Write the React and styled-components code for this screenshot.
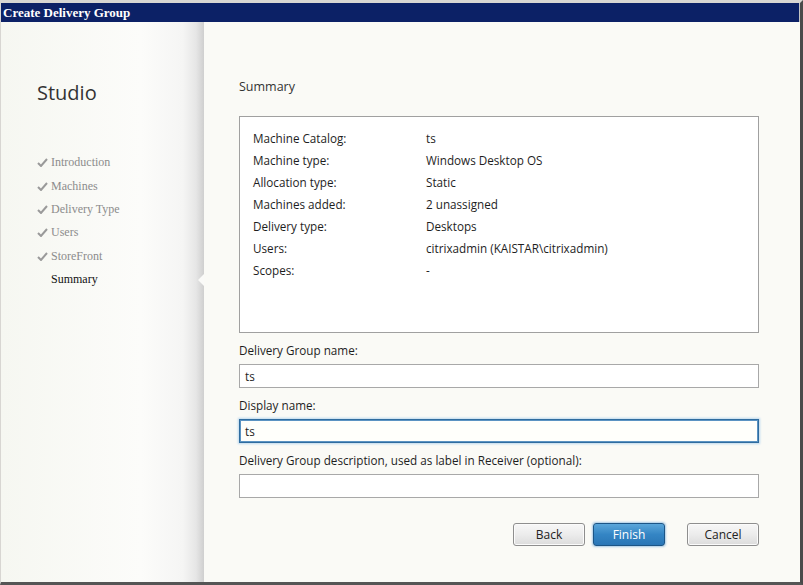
import React from "react";
import styled, { createGlobalStyle } from "styled-components";

const GlobalStyle = createGlobalStyle`
  html, body {
    margin: 0;
    padding: 0;
    background: #d6d3ce;
  }
  * { box-sizing: border-box; }
`;

const SUMMARY = [
  ["Machine Catalog:", "ts"],
  ["Machine type:", "Windows Desktop OS"],
  ["Allocation type:", "Static"],
  ["Machines added:", "2 unassigned"],
  ["Delivery type:", "Desktops"],
  ["Users:", "citrixadmin (KAISTAR\\citrixadmin)"],
  ["Scopes:", "-"],
];

const STEPS = ["Introduction", "Machines", "Delivery Type", "Users", "StoreFront", "Summary"];

const Window = styled.div`
  width: 803px;
  height: 585px;
  display: flex;
  flex-direction: column;
  border-top: 3px solid #d8d6d2;
  border-left: 1px solid #d8d6d2;
  border-right: 3px solid #4a4a4a;
  border-bottom: 3px solid #555;
  box-shadow: inset -1px -1px 0 #c4c4c4;
  background: #f9f9f6;
`;
const TitleBar = styled.div`
  height: 19px;
  background: #0c2166;
  color: #fff;
  font-family: "Liberation Serif", serif;
  font-weight: bold;
  font-size: 13px;
  line-height: 19px;
  padding-left: 2px;
  margin-right: 1px;
`;
const Body = styled.div`
  flex: 1;
  display: flex;
  flex-direction: row;
  min-height: 0;
`;
const Sidebar = styled.div`
  width: 203px;
  flex-shrink: 0;
  padding-top: 57px;
  background: linear-gradient(
    to right,
    #f6f7f1 0,
    #fcfcfa 140px,
    #f5f5f4 182px,
    #e6e6e6 195px,
    #cfcfcf 203px
  );
`;
const Brand = styled.div`
  padding-left: 36px;
  font-family: "Open Sans", sans-serif;
  font-size: 20px;
  line-height: 28px;
  color: #333;
`;
const StepList = styled.div`
  margin-top: 44px;
  display: flex;
  flex-direction: column;
`;
const Step = styled.div`
  position: relative;
  display: flex;
  align-items: center;
  height: 23.4px;
  padding-left: 36px;
  font-family: "Liberation Serif", serif;
  font-size: 12px;
  color: ${(p) => (p.active ? "#111" : "#8c8c8c")};
`;
const Check = styled.span`
  width: 14px;
  display: inline-flex;
  align-items: center;
`;
const Pointer = styled.span`
  position: absolute;
  right: 0;
  top: 50%;
  margin-top: -6px;
  width: 0;
  height: 0;
  border-top: 6px solid transparent;
  border-bottom: 6px solid transparent;
  border-right: 6px solid #fafaf8;
`;
const Main = styled.div`
  flex: 1;
  padding: 56px 41px 0 35px;
  background: #fafaf6;
  font-family: "Open Sans", sans-serif;
  font-size: 11.7px;
  color: #1e1e1e;
`;
const Heading = styled.div`
  font-size: 12.5px;
  line-height: 18px;
  color: #333;
  margin-bottom: 20px;
`;
const SummaryBox = styled.div`
  height: 217px;
  border: 1px solid #a0a0a0;
  background: #fff;
  padding: 10px 0 0 13px;
`;
const Row = styled.div`
  display: flex;
  height: 22px;
  align-items: center;
`;
const Label = styled.span`
  width: 173px;
`;
const FieldLabel = styled.div`
  margin-top: 7px;
  height: 20px;
  line-height: 20px;
  margin-bottom: 4px;
`;
const Input = styled.div`
  height: 24px;
  border: 1px solid ${(p) => (p.focused ? "#2f6c9f" : "#a8a8a8")};
  background: ${(p) => (p.focused ? "#fffffb" : "#fff")};
  box-shadow: ${(p) => (p.focused ? "0 0 2px 1px #bcd8ee, inset 0 0 0 1px #5b93c2" : "none")};
  padding-left: 5px;
  line-height: 22px;
`;
const Buttons = styled.div`
  display: flex;
  justify-content: flex-end;
  margin-top: 25px;
`;
const Button = styled.div`
  width: 72px;
  height: 23px;
  margin-left: ${(p) => p.gap}px;
  border-radius: 3px;
  display: flex;
  align-items: center;
  justify-content: center;
  font-size: 12px;
  border: 1px solid ${(p) => (p.primary ? "#1c5586" : "#8e8e8e")};
  color: ${(p) => (p.primary ? "#fff" : "#222")};
  background: ${(p) =>
    p.primary
      ? "linear-gradient(#5aa6da, #3485c4 50%, #2a76b6)"
      : "linear-gradient(#f7f7f7, #ececec 50%, #dcdcdc)"};
  box-shadow: ${(p) => (p.primary ? "0 0 2px 1px #a9cbe6" : "inset 0 0 0 1px #fbfbfb")};
`;

const CheckIcon = () => (
  <svg width="11" height="9" viewBox="0 0 11 9">
    <path d="M1 5 L4 8 L10 1" fill="none" stroke="#9a9a9a" strokeWidth="2" />
  </svg>
);

const App = () => {
  const active = STEPS.length - 1;
  return (
    <>
      <GlobalStyle />
      <Window>
        <TitleBar>Create Delivery Group</TitleBar>
        <Body>
          <Sidebar>
            <Brand>Studio</Brand>
            <StepList>
              {STEPS.map((s, i) => (
                <Step key={s} active={i === active}>
                  <Check>{i < active && <CheckIcon />}</Check>
                  {s}
                  {i === active && <Pointer />}
                </Step>
              ))}
            </StepList>
          </Sidebar>
          <Main>
            <Heading>Summary</Heading>
            <SummaryBox>
              {SUMMARY.map(([k, v]) => (
                <Row key={k}>
                  <Label>{k}</Label>
                  <span>{v}</span>
                </Row>
              ))}
            </SummaryBox>
            <FieldLabel>Delivery Group name:</FieldLabel>
            <Input>ts</Input>
            <FieldLabel>Display name:</FieldLabel>
            <Input focused>ts</Input>
            <FieldLabel>Delivery Group description, used as label in Receiver (optional):</FieldLabel>
            <Input />
            <Buttons>
              <Button gap={0}>Back</Button>
              <Button primary gap={8}>Finish</Button>
              <Button gap={22}>Cancel</Button>
            </Buttons>
          </Main>
        </Body>
      </Window>
    </>
  );
};

export default App;
